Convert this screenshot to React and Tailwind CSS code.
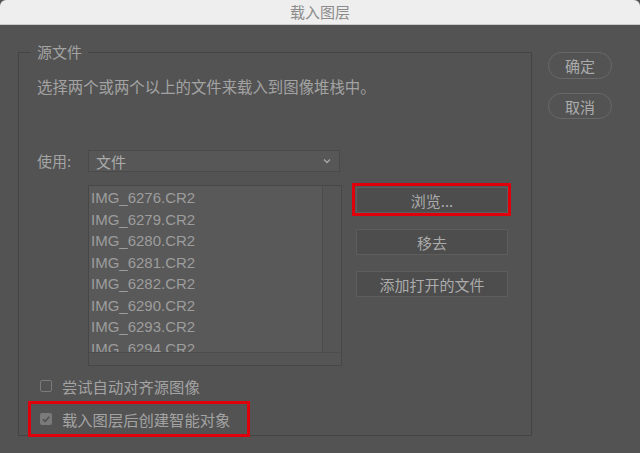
const files = [
  'IMG_6276.CR2',
  'IMG_6279.CR2',
  'IMG_6280.CR2',
  'IMG_6281.CR2',
  'IMG_6282.CR2',
  'IMG_6290.CR2',
  'IMG_6293.CR2',
  'IMG_6294.CR2',
];

const cjk = { fontFamily: '"Noto Sans CJK SC", "Noto Sans", sans-serif' };

function SideButton({ children, highlight }) {
  return (
    <div className="relative">
      <button className="w-[152px] h-[26px] flex items-center justify-center bg-[#4d4d4d] border border-[#5d5d5d] text-[15px] text-[#ababab] leading-none">
        {children}
      </button>
      {/* red annotation frame */}
      {highlight && (
        <span className="absolute -left-[4px] -top-[4px] -right-[3px] -bottom-[3px] border-[3px] border-[#e0000b]" />
      )}
    </div>
  );
}

function Checkbox({ checked, label, highlight }) {
  return (
    <div className="relative flex items-center h-[20px] ml-[3px]">
      <span
        className={
          checked
            ? 'w-[12px] h-[12px] rounded-[2px] bg-[#7a7a7a] flex items-center justify-center'
            : 'w-[12px] h-[12px] rounded-[2px] border border-[#7a7a7a]'
        }
      >
        {checked && (
          <svg width="10" height="10" viewBox="0 0 10 10">
            <path d="M2 5.2 L4.2 7.4 L8.2 2.8" fill="none" stroke="#505050" strokeWidth="1.6" />
          </svg>
        )}
      </span>
      <span className="ml-[10px] text-[15.3px] text-[#a3a3a3] leading-[20px]">{label}</span>
      {highlight && (
        <span className="absolute -left-[12px] -top-[8px] -bottom-[8px] w-[222px] border-[3px] border-[#e0000b]" />
      )}
    </div>
  );
}

export default function App() {
  return (
    <div className="w-[640px] h-[453px] bg-[#535353] flex flex-col overflow-hidden" style={cjk}>
      {/* Title bar */}
      <div className="h-[25px] bg-[#eeeeee] border-b border-[#c9c9c9] rounded-t-[6px] flex items-center justify-center text-[15px] text-[#8c8c8c]">
        载入图层
      </div>

      <div className="flex pt-[27px] pl-[18px]">
        {/* Source files group */}
        <div className="relative w-[514px] h-[384px] border border-[#444444] pl-[18px] pt-[23px]">
          <span className="absolute left-[12px] -top-[11px] px-[6px] bg-[#535353] text-[15px] leading-[20px] text-[#a3a3a3]">
            源文件
          </span>

          <p className="text-[15.4px] leading-[20px] text-[#a3a3a3]">
            选择两个或两个以上的文件来载入到图像堆栈中。
          </p>

          <div className="flex items-center mt-[54px]">
            <span className="w-[51px] text-[15px] text-[#a3a3a3] leading-[20px]">使用:</span>
            <div className="w-[252px] h-[22px] bg-[#575757] border border-[#4a4a4a] flex items-center justify-between pl-[7px] pr-[8px]">
              <span className="text-[15px] text-[#ababab] leading-none">文件</span>
              <svg width="8" height="6" viewBox="0 0 8 6">
                <path d="M1 1.5 L4 4.5 L7 1.5" fill="none" stroke="#a8a8a8" strokeWidth="1.3" />
              </svg>
            </div>
          </div>

          <div className="flex mt-[13px] ml-[51px]">
            {/* File list */}
            <div className="w-[254px] h-[181px] border border-[#474747] flex flex-col">
              <div className="flex h-[166px]">
                <div
                  className="flex-1 bg-[#595959] overflow-hidden pl-[2px] pt-[1px] text-[15px] leading-[21.5px] text-[#9d9d9d]"
                  style={{ fontFamily: '"Liberation Sans", Arial, sans-serif' }}
                >
                  {files.map((f) => (
                    <div key={f}>{f}</div>
                  ))}
                </div>
                <div className="w-[19px] bg-[#555555] border-l border-[#4c4c4c]" />
              </div>
              <div className="flex-1 bg-[#555555] border-t border-[#4c4c4c]" />
            </div>

            {/* Action buttons */}
            <div className="ml-[14px] pt-[2px] flex flex-col gap-[16px]">
              <SideButton highlight>浏览...</SideButton>
              <SideButton>移去</SideButton>
              <SideButton>添加打开的文件</SideButton>
            </div>
          </div>

          <div className="mt-[10px]">
            <Checkbox label="尝试自动对齐源图像" />
          </div>
          <div className="mt-[13px]">
            <Checkbox checked highlight label="载入图层后创建智能对象" />
          </div>
        </div>

        {/* OK / Cancel */}
        <div className="ml-[16px] flex flex-col">
          <button className="w-[64px] h-[27px] rounded-full border border-[#686868] text-[15px] text-[#ababab] leading-none">
            确定
          </button>
          <button className="w-[64px] h-[26px] mt-[14px] rounded-full border border-[#686868] text-[15px] text-[#ababab] leading-none">
            取消
          </button>
        </div>
      </div>
    </div>
  );
}
